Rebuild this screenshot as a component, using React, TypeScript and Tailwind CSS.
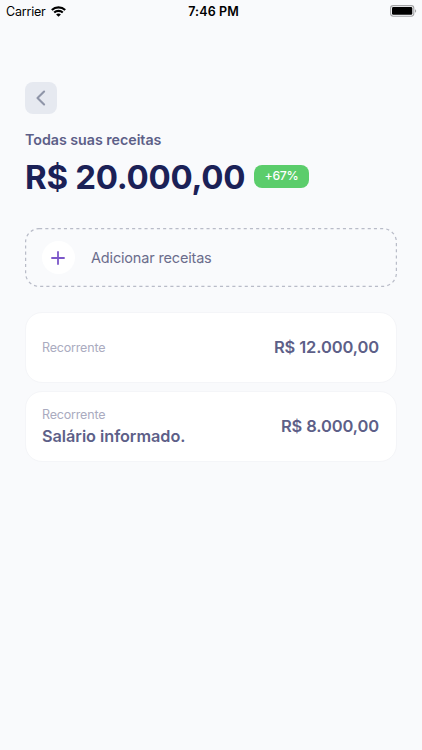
import React from 'react';

interface Income {
  id: string;
  label: string;
  title?: string;
  amount: string;
}

const incomes: Income[] = [
  { id: '1', label: 'Recorrente', amount: 'R$ 12.000,00' },
  { id: '2', label: 'Recorrente', title: 'Salário informado.', amount: 'R$ 8.000,00' },
];

const WifiIcon: React.FC = () => (
  <svg width="15" height="11" viewBox="0 0 15 11" fill="none" stroke="#000" strokeWidth="2.1">
    <path d="M0.8 4.1C4.5 0.5 10.5 0.5 14.2 4.1" />
    <path d="M3.2 6.6C5.6 4.3 9.4 4.3 11.8 6.6" />
    <path d="M7.5 10.7L5.1 8.4C6.4 7.1 8.6 7.1 9.9 8.4Z" fill="#000" stroke="none" />
  </svg>
);

const BatteryIcon: React.FC = () => (
  <svg width="27" height="12" viewBox="0 0 27 12" fill="none">
    <rect x="0.6" y="0.6" width="23.2" height="10.6" rx="2.6" stroke="#a3a4a6" strokeWidth="1.1" />
    <rect x="2" y="2.1" width="20.3" height="7.6" rx="1.3" fill="#000" />
    <path d="M25 4.2C26.6 4.7 26.6 7.2 25 7.7Z" fill="#a3a4a6" />
  </svg>
);

const StatusBar: React.FC = () => (
  <div className="grid h-[22px] grid-cols-3 items-center pl-1.5 pr-[5px] text-black">
    <div className="flex items-center gap-[5px] text-[12.5px] tracking-[-0.2px]">
      <span className="pt-0.5">Carrier</span>
      <WifiIcon />
    </div>
    <span className="pl-1 pt-0.5 text-center text-[12.5px] font-semibold tracking-[0.1px]">7:46 PM</span>
    <div className="flex justify-end">
      <BatteryIcon />
    </div>
  </div>
);

const IncomeCard: React.FC<{ income: Income }> = ({ income }) => (
  <div className="flex h-[71px] items-center justify-between rounded-[17px] border border-[#f4f5f8] bg-white px-4">
    <div className="flex flex-col">
      <span className="text-[12.5px] leading-5 tracking-[-0.18px] text-[#aaabc0]">{income.label}</span>
      {income.title && (
        <span className="text-[16.25px] font-semibold leading-[23px] tracking-[-0.04px] text-[#5d5f88]">
          {income.title}
        </span>
      )}
    </div>
    <span className="pr-px text-[16.5px] font-semibold tracking-[-0.12px] text-[#5d5f88]">
      {income.amount}
    </span>
  </div>
);

export default function App() {
  return (
    <div className="h-[750px] w-[422px] overflow-hidden bg-[#f9fafc] font-['Inter',sans-serif]">
      <StatusBar />

      <main className="px-[25px] pt-[60px]">
        <button className="flex h-8 w-8 items-center justify-center rounded-lg bg-[#e6e9f0]">
          <svg width="10" height="16" viewBox="0 0 10 16" fill="none">
            <path
              d="M8.1 1.6L1.5 8L8.1 14.4"
              stroke="#8f95a8"
              strokeWidth="2.1"
              strokeLinecap="round"
              strokeLinejoin="round"
            />
          </svg>
        </button>

        {/* Total */}
        <h2 className="mt-4 text-[14.25px] font-semibold leading-5 tracking-[-0.03px] text-[#5d5f88]">
          Todas suas receitas
        </h2>
        <div className="mt-[5px] flex h-[42px] items-center gap-[9px]">
          <h1 className="w-[220px] whitespace-nowrap pt-0.5 text-[33px] font-bold leading-[42px] tracking-[-0.28px] text-[#1b2157]">
            R$ 20.000,00
          </h1>
          <span className="flex h-[23px] w-[55px] items-center justify-center rounded-lg bg-[#5bcd6b] pt-px text-[12.25px] font-medium tracking-[-0.3px] text-white">
            +67%
          </span>
        </div>

        {/* Add income */}
        <button className="relative mt-[31px] flex h-[59px] w-full items-center gap-4 rounded-[14px] px-[17px] text-left">
          <svg className="absolute inset-0 h-full w-full" viewBox="0 0 372 59" fill="none">
            <rect
              x="0.6"
              y="0.6"
              width="370.8"
              height="57.8"
              rx="13.5"
              stroke="#b9bcc8"
              strokeWidth="1.25"
              strokeDasharray="3.1 3.1"
            />
          </svg>
          <span className="flex h-[33px] w-[33px] items-center justify-center rounded-full bg-white">
            <svg className="mr-px" width="14" height="14" viewBox="0 0 14 14">
              <path d="M7 0.3V13.7M0.3 7H13.7" stroke="#7c57c9" strokeWidth="1.8" />
            </svg>
          </span>
          <span className="pt-px text-[14.5px] tracking-[-0.17px] text-[#6b6d8c]">Adicionar receitas</span>
        </button>

        <div className="mt-[25px] flex flex-col gap-2">
          {incomes.map((income) => (
            <IncomeCard key={income.id} income={income} />
          ))}
        </div>
      </main>
    </div>
  );
}
